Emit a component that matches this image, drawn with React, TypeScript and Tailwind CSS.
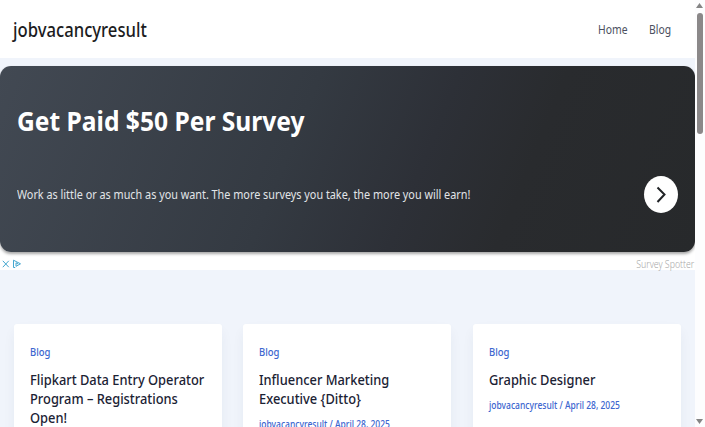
import React from "react";

type Post = { title: string[] };

const posts: Post[] = [
  { title: ["Flipkart Data Entry Operator", "Program – Registrations", "Open!"] },
  { title: ["Influencer Marketing", "Executive {Ditto}"] },
  { title: ["Graphic Designer"] },
];

function Card({ post }: { post: Post }) {
  return (
    <article className="h-[180px] w-[208px] shrink-0 rounded-[3px] bg-white pl-[16.3px] pt-[19px] shadow-[0_6px_14px_-2px_rgba(20,50,80,0.07)]">
      <a className="block w-fit origin-left scale-x-[0.86] text-[11px] font-medium leading-[18px] text-[#3c66cf]">Blog</a>
      <h2 className="mt-[9px] text-[15px] font-medium leading-[19px] text-[#1b2234]">
        {post.title.map((line) => (
          <span key={line} className="block w-fit origin-left scale-x-[0.857] whitespace-nowrap">
            {line}
          </span>
        ))}
      </h2>
      <p className="mt-[7px] w-fit origin-left scale-x-[0.85] whitespace-nowrap text-[10px] font-medium leading-[18px] text-[#3c66cf]">
        jobvacancyresult / April 28, 2025
      </p>
    </article>
  );
}

export default function App() {
  return (
    <div className="flex h-[427px] w-[705px] overflow-hidden bg-[#fdfdfe] font-['Noto_Sans',sans-serif]">
      <div className="flex w-[694.5px] shrink-0 flex-col overflow-hidden bg-[#f0f4fb]">
        <header className="flex h-[58px] shrink-0 items-center justify-between bg-white pl-[13px] pr-6 pt-[2px]">
          <span className="w-fit origin-left scale-x-[0.833] text-[20px] font-medium text-[#1c1c1e]">jobvacancyresult</span>
          <nav className="flex gap-[22px] pt-px text-[12.5px] text-[#4b4f60]">
            <a className="w-[29px] origin-left scale-x-[0.83]">Home</a>
            <a className="w-[22px] origin-left scale-x-[0.83]">Blog</a>
          </nav>
        </header>
        <div className="mt-2 h-[204px] shrink-0 bg-[linear-gradient(#f0f4fb_50%,#fff_50%)]">
          <section className="h-[186px] rounded-[11px] bg-[linear-gradient(112deg,#424953_0%,#343a42_42%,#2d3037_60%,#292b2e_74%,#27292b_100%)] pl-[17px] pr-[17px] pt-[35px] shadow-[0_2px_3px_rgba(0,0,0,0.35)]">
            <h1 className="w-fit origin-left scale-x-[0.928] whitespace-nowrap text-[26.5px] font-bold leading-[40px] text-white">Get Paid $50 Per Survey</h1>
            <div className="mt-[35px] flex h-[37px] items-center justify-between">
              <p className="w-fit origin-left scale-x-[0.902] whitespace-nowrap text-[12px] text-[#e2e5e8]">
                Work as little or as much as you want. The more surveys you take, the more you will earn!
              </p>
              <button className="flex h-[37px] w-[34px] shrink-0 items-center justify-center rounded-[50%] bg-white">
                <svg width="34" height="37" viewBox="0 0 34 37" fill="none" stroke="#202326" strokeWidth="2">
                  <path d="M13.5 11.5 20.5 18.5 13.5 26" />
                </svg>
              </button>
            </div>
          </section>
          <div className="flex h-[18px] items-center justify-between pl-[2px] pt-[6px]">
            <svg width="20" height="10" viewBox="0 0 20 10" fill="none" stroke="#43a6cf" strokeWidth="1">
              <path d="M.8 1.8 6.8 8.2M6.8 1.8 .8 8.2M13.2 8.5h-1.7V1.2L18.5 4.8 14 7.3V3.8L16 4.9" />
            </svg>
            <span className="w-fit origin-right scale-x-[0.875] text-[10px] font-light leading-[12px] text-[#a8a8a8]">Survey Spotter</span>
          </div>
        </div>
        <main className="mt-[54px] flex gap-[21.7px] pl-[13.5px]">
          {posts.map((post) => (
            <Card key={post.title[0]} post={post} />
          ))}
        </main>
      </div>
      <aside className="flex grow flex-col items-center justify-between pb-[3px] pt-[3px]">
        <div className="flex flex-col items-center gap-[5px]">
          <svg width="7" height="5" viewBox="0 0 7 5" fill="#858585"><path d="M3.5 0 7 5H0z" /></svg>
          <div className="h-[121px] w-[6px] rounded-full bg-[#8b8889]" />
        </div>
        <svg width="7" height="5" viewBox="0 0 7 5" fill="#858585"><path d="M0 0h7L3.5 5z" /></svg>
      </aside>
    </div>
  );
}
